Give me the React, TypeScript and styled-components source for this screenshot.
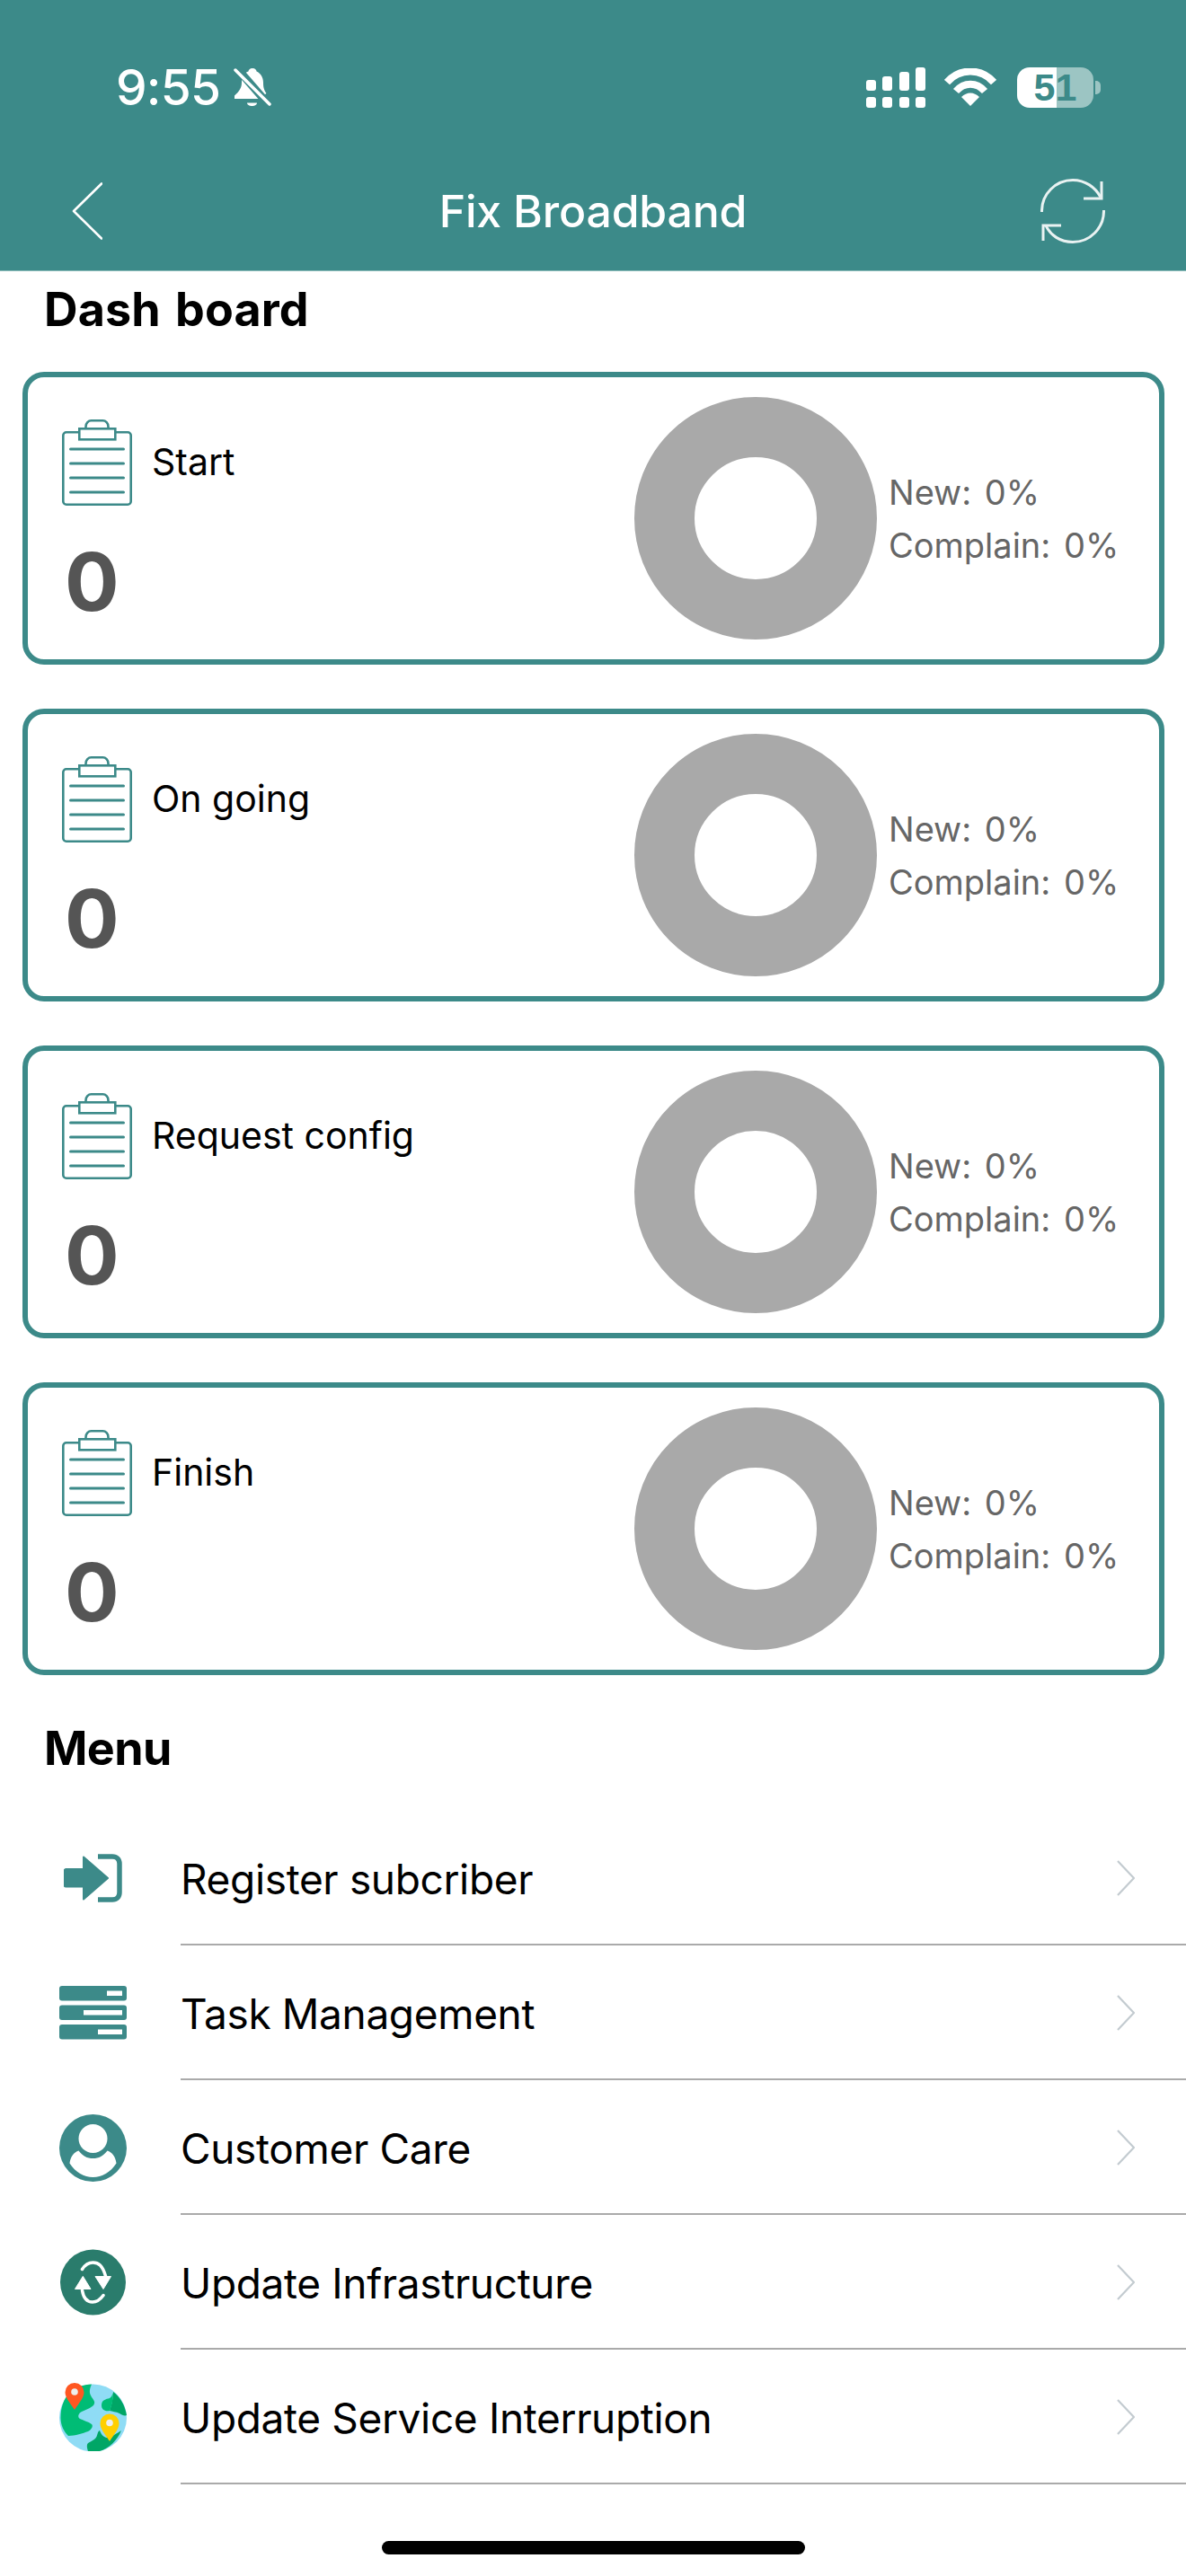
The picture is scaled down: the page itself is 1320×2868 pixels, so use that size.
import React from "react";
import styled, { createGlobalStyle } from "styled-components";

const teal = "#3c8a89";

const Global = createGlobalStyle`
  html, body { margin: 0; padding: 0; background: #fff; }
  body { font-family: Inter, "Noto Sans", "Liberation Sans", sans-serif; }
  * { box-sizing: border-box; }
`;

const Page = styled.div`
  width: 1320px;
  height: 2868px;
  overflow: hidden;
  background: #fff;
  display: flex;
  flex-direction: column;
`;

const Header = styled.header`
  height: 302px;
  flex: none;
  background: ${teal};
  border-bottom: 1px solid #8fbcbb;
  padding-top: 67px;
  color: #fff;
`;

const StatusBar = styled.div`
  height: 60px;
  display: flex;
  align-items: center;
  justify-content: space-between;
  padding: 0 95px 0 129px;
`;

const TimeGroup = styled.div`
  display: flex;
  align-items: center;
  gap: 15px;
`;

const Time = styled.span`
  font-size: 55px;
  font-weight: 500;
  letter-spacing: -0.8px;
  line-height: 60px;
`;

const StatusIcons = styled.div`
  display: flex;
  align-items: center;
`;

const Battery = styled.div`
  display: flex;
  align-items: center;
  margin-left: 23px;
  gap: 2px;
`;

const BatteryBody = styled.div`
  width: 85px;
  height: 45px;
  border-radius: 14px;
  background: linear-gradient(90deg, #fff 0 44px, #9cc5c3 44px 100%);
  color: ${teal};
  font-size: 43px;
  font-weight: 700;
  display: flex;
  align-items: center;
  justify-content: center;
  font-family: "Liberation Sans", Arial, sans-serif;
`;

const BatteryNub = styled.div`
  width: 6px;
  height: 15px;
  border-radius: 0 5px 5px 0;
  background: #9cc5c3;
`;

const NavBar = styled.div`
  margin-top: 43px;
  height: 130px;
  display: grid;
  grid-template-columns: 1fr auto 1fr;
  align-items: center;
  padding: 0 80px;
`;

const NavTitle = styled.h1`
  margin: 0;
  font-size: 50px;
  font-weight: 500;
  letter-spacing: -0.2px;
  white-space: nowrap;
`;

const NavRight = styled.div`
  display: flex;
  justify-content: flex-end;
  padding-right: 10px;
`;

const SectionTitle = styled.h2`
  margin: 0;
  padding-left: 49px;
  font-size: 52px;
  line-height: 60px;
  font-weight: 700;
  letter-spacing: -0.6px;
  color: #000;
`;

const DashTitle = styled(SectionTitle)`
  margin-top: 13px;
  margin-bottom: 39px;
  letter-spacing: 0.1px;
  word-spacing: 4px;
`;

const MenuTitle = styled(SectionTitle)`
  margin-top: 52px;
  margin-bottom: 39px;
`;

const CardList = styled.div`
  display: flex;
  flex-direction: column;
  gap: 49px;
  padding: 0 24px 0 25px;
`;

const Card = styled.section`
  height: 326px;
  border: 6px solid ${teal};
  border-radius: 24px;
  display: flex;
  align-items: center;
`;

const CardMain = styled.div`
  flex: 1;
  align-self: flex-start;
  padding: 47px 0 0 38px;
`;

const CardHead = styled.div`
  display: flex;
  align-items: center;
  gap: 22px;
`;

const CardLabel = styled.span`
  font-size: 41px;
  line-height: 50px;
  padding-bottom: 2px;
  color: #000;
`;

const CardCount = styled.div`
  margin: 35px 0 0 3px;
  font-size: 90px;
  line-height: 100px;
  font-weight: 700;
  color: #555;
`;

const Donut = styled.div`
  width: 270px;
  height: 270px;
  flex: none;
  border-radius: 50%;
  border: 67px solid #a9a9a9;
  background: #fff;
`;

const Legend = styled.div`
  width: 301px;
  flex: none;
  margin-left: 13px;
  padding-top: 2px;
  font-size: 38px;
  word-spacing: 4px;
  line-height: 59px;
  color: #666;
  white-space: nowrap;
`;

const MenuList = styled.ul`
  list-style: none;
  margin: 0;
  padding: 0;
`;

const MenuRow = styled.li`
  height: 150px;
  display: flex;
  align-items: stretch;
`;

const MenuIcon = styled.div`
  width: 201px;
  flex: none;
  padding-left: 66px;
  display: flex;
  align-items: center;
`;

const MenuBody = styled.div`
  flex: 1;
  display: flex;
  align-items: center;
  justify-content: space-between;
  padding: 2px 57px 0 0;
  border-bottom: 2px solid #aaa;
`;

const MenuText = styled.span`
  padding-top: 2px;
  font-size: 46px;
  color: #000;
  letter-spacing: -0.35px;
`;

const HomeBar = styled.div`
  width: 471px;
  height: 15px;
  margin: 63px auto 0;
  border-radius: 8px;
  background: #000;
  flex: none;
`;

const Bell = () => (
  <svg width="42" height="42" viewBox="0 0 42 42">
    <path
      d="M21 0c-3 0-4.500 2-4.500 3.500C11 5.500 9 10 9 16c0 6-3 10-8 14.500V34h38v-3.500C34 26 33 22 33 16c0-6-3-10.500-7.500-12.500C25.500 2 24 0 21 0z"
      fill="#fff"
    />
    <path d="M15 38.500h11c0 2-2.500 3.500-5.500 3.500S15 40.500 15 38.500z" fill="#fff" />
    <path d="M2 -2L42 44" stroke={teal} strokeWidth="9" />
    <path d="M34 30L44 42" stroke={teal} strokeWidth="14" />
    <path d="M2 2L40 40" stroke="#fff" strokeWidth="3.500" strokeLinecap="round" />
  </svg>
);

const Cellular = () => (
  <svg width="66" height="45" viewBox="0 0 66 45" fill="#fff">
    {[
      [0, 14],
      [18, 10],
      [37, 5],
      [55, 0],
    ].map(([x, y]) => (
      <React.Fragment key={x}>
        <rect x={x} y={y} width="11" height={26 - y} rx="3" />
        <rect x={x} y="33" width="11" height="12" rx="3" />
      </React.Fragment>
    ))}
  </svg>
);

const Wifi = () => (
  <svg width="58" height="42" viewBox="0 0 58 42" style={{ marginLeft: 21 }} fill="none">
    <path d="M3 15.500C17-.5 41-.5 55 15.500" stroke="#fff" strokeWidth="8" />
    <path d="M13 25.500C22 15 36 15 45 25.500" stroke="#fff" strokeWidth="8" />
    <path d="M19 32C25 26 33 26 39 32L29 42z" fill="#fff" />
  </svg>
);

const BackIcon = () => (
  <svg width="34" height="64" viewBox="0 0 34 64" fill="none">
    <path d="M33 1.500L2 32l31 30.500" stroke="#fff" strokeWidth="2.600" strokeLinecap="round" strokeLinejoin="round" />
  </svg>
);

const RefreshIcon = () => (
  <svg width="72" height="72" viewBox="0 0 72 72" fill="none" stroke="#e9f2f2" strokeWidth="3">
    <path d="M1.500 37C1 17 17 1.500 36 1.500c14 0 25 8 31 19" />
    <path d="M68 3v19H48" />
    <path d="M70.500 35C71 55 55 70.500 36 70.500 22 70.500 11 63 6 52" />
    <path d="M3 69V52h20" />
  </svg>
);

const Clipboard = () => (
  <svg width="78" height="96" viewBox="0 0 78 96" fill="none" stroke={teal} strokeWidth="2.600" style={{ flex: "none" }}>
    <rect x="1.300" y="14.300" width="75.400" height="80.400" rx="3.500" />
    <rect x="19.300" y="10.300" width="40" height="12" fill="#fff" />
    <path d="M26.500 10V8c0-4 3-6.700 6-6.700h13c3 0 6 2.700 6 6.700v2" />
    <path d="M9.500 33h59M9.500 49h59M9.500 65h59M9.500 81h59" strokeWidth="3" strokeLinecap="round" />
  </svg>
);

const Chevron = () => (
  <svg width="20" height="40" viewBox="0 0 20 40" fill="none">
    <path d="M1 1l18 19L1 39" stroke="#c3cbd0" strokeWidth="2.200" />
  </svg>
);

const LoginIcon = () => (
  <svg width="75" height="54" viewBox="0 0 75 54" fill={teal} style={{ marginLeft: 5 }}>
    <path d="M2.500 17H22V3.500L49 27 22 50.500V36.500H2.500a2 2 0 0 1-2-2V19a2 2 0 0 1 2-2z" stroke={teal} strokeWidth="2" strokeLinejoin="round" />
    <path d="M38 3h16c5 0 8 3 8 8v32c0 5-3 8-8 8H38" fill="none" stroke={teal} strokeWidth="5.500" />
  </svg>
);

const TasksIcon = () => (
  <svg width="75" height="60" viewBox="0 0 75 60">
    <rect y="0" width="75" height="16.500" rx="3" fill={teal} />
    <rect y="21.500" width="75" height="16.500" rx="3" fill={teal} />
    <rect y="43" width="75" height="16.500" rx="3" fill={teal} />
    <rect x="53" y="5.500" width="17" height="5.500" fill="#fff" />
    <rect x="27" y="27" width="43" height="5.500" fill="#fff" />
    <rect x="43" y="48.500" width="27" height="5.500" fill="#fff" />
  </svg>
);

const PersonIcon = () => (
  <svg width="75" height="75" viewBox="0 0 75 75">
    <circle cx="37.500" cy="37.500" r="37.500" fill={teal} />
    <circle cx="37.500" cy="27" r="16" fill="#fff" />
    <path d="M11.500 54.500C12.500 47 16 42.500 21.500 40.500 26 46.500 31 49 37.500 49S49 46.500 53.500 40.500C59 42.500 62.500 47 63.500 54.500 57 64.500 47.500 70 37.500 70S18 64.500 11.500 54.500z" fill="#fff" />
  </svg>
);

const SyncIcon = () => (
  <svg width="75" height="75" viewBox="0 0 75 75" fill="none">
    <circle cx="37.500" cy="37" r="36.500" fill="#2a7c6c" />
    <path d="M25.500 22.500C29 17 33 15 37.500 15c6 0 10.500 3 14 15M49 51.500C45 57 41 59 37 59c-6 0-10-4-11.500-13" stroke="#fff" strokeWidth="3.500" strokeLinecap="round" />
    <path d="M40 30.500h17.500L49 44.500zM17.500 44.500h17.500L26.300 30.300z" fill="#fff" stroke="#fff" strokeWidth="1" strokeLinejoin="round" />
  </svg>
);

const GlobeIcon = () => (
  <svg width="75" height="76" viewBox="0 0 75 76">
    <circle cx="37.500" cy="39" r="37.500" fill="#8fdcf5" />
    <path d="M36 1.500C34 6 33 10 35 14c2 4 5 6 4 9-1 4-8 6-14 9-4 2-5 6-2 8 4 2 9 3 13 6 2 2 0 6-4 8-6 2-14 5-22 5C5 54 1.500 47 1.500 39 1.500 27 5 18 11 11 18 5 27 1.500 36 1.500z" fill="#00bc75" />
    <path d="M60 10c7 5 13 14 15 26-2 1-5 0-8-2-4-2-8-2-11-3 2-6 4-14 4-21z" fill="#00a666" />
    <path d="M56 31c-5 1-9-1-9-6 0-6 5-7 9-8 2-1 3-3 3.500-6 1 6-1 14-3.500 20z" fill="#00bc75" />
    <path d="M32 76c-1-3-2-7 0-9 3-2 6-3 8-5 3-3 2-8 5-9 2 6 6 8 8 8 6-1 11-5 16-8-6 14-18 24-31.500 24-2 0-4 0-5.500-1z" fill="#00a666" />
    <path d="M17 30C11 21 6.500 16 6.500 10.500a10.500 10.500 0 0 1 21 0C27.500 16 23 21 17 30z" fill="#ff5722" />
    <circle cx="17" cy="10" r="3.800" fill="#eee" />
    <path d="M56 65c-6-9-10.500-14-10.500-20a10.500 10.500 0 0 1 21 0c0 6-4.500 11-10.500 20z" fill="#ffcf00" />
    <circle cx="56" cy="44.500" r="3.800" fill="#eee" />
  </svg>
);

const cards = ["Start", "On going", "Request config", "Finish"];

const menu: { label: string; icon: React.ReactNode }[] = [
  { label: "Register subcriber", icon: <LoginIcon /> },
  { label: "Task Management", icon: <TasksIcon /> },
  { label: "Customer Care", icon: <PersonIcon /> },
  { label: "Update Infrastructure", icon: <SyncIcon /> },
  { label: "Update Service Interruption", icon: <GlobeIcon /> },
];

export default function App() {
  return (
    <Page>
      <Global />
      <Header>
        <StatusBar>
          <TimeGroup>
            <Time>9:55</Time>
            <Bell />
          </TimeGroup>
          <StatusIcons>
            <Cellular />
            <Wifi />
            <Battery>
              <BatteryBody>51</BatteryBody>
              <BatteryNub />
            </Battery>
          </StatusIcons>
        </StatusBar>
        <NavBar>
          <BackIcon />
          <NavTitle>Fix Broadband</NavTitle>
          <NavRight>
            <RefreshIcon />
          </NavRight>
        </NavBar>
      </Header>
      <DashTitle>Dash board</DashTitle>
      <CardList>
        {cards.map((c) => (
          <Card key={c}>
            <CardMain>
              <CardHead>
                <Clipboard />
                <CardLabel>{c}</CardLabel>
              </CardHead>
              <CardCount>0</CardCount>
            </CardMain>
            <Donut />
            <Legend>
              <div>New: 0%</div>
              <div>Complain: 0%</div>
            </Legend>
          </Card>
        ))}
      </CardList>
      <MenuTitle>Menu</MenuTitle>
      <MenuList>
        {menu.map((m) => (
          <MenuRow key={m.label}>
            <MenuIcon>{m.icon}</MenuIcon>
            <MenuBody>
              <MenuText>{m.label}</MenuText>
              <Chevron />
            </MenuBody>
          </MenuRow>
        ))}
      </MenuList>
      <HomeBar />
    </Page>
  );
}
